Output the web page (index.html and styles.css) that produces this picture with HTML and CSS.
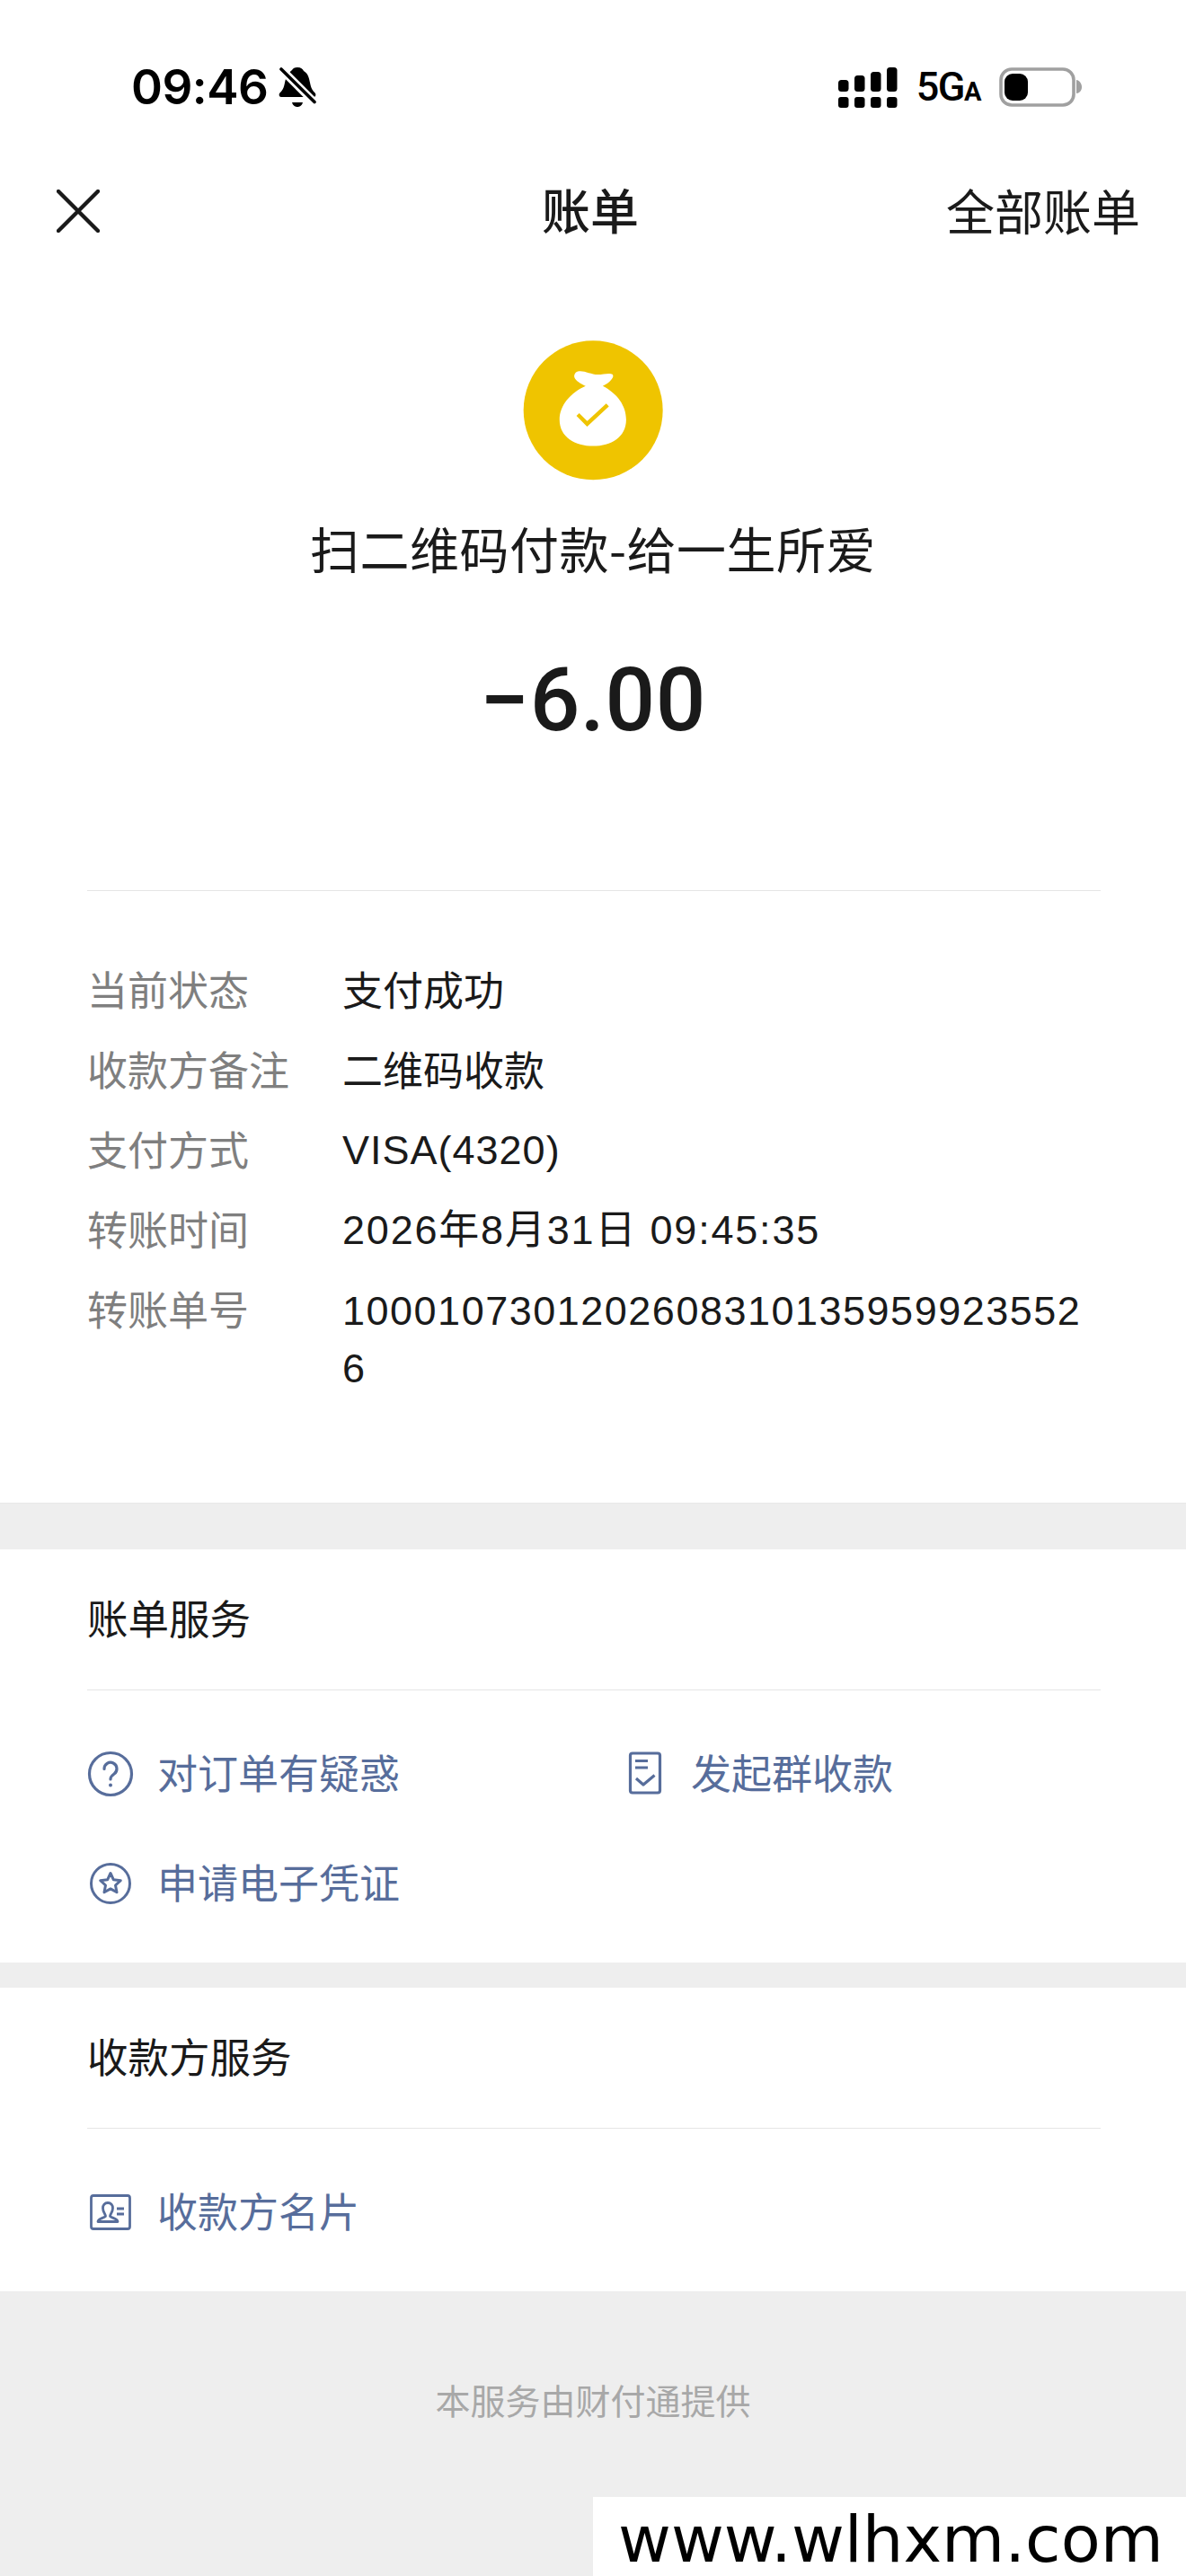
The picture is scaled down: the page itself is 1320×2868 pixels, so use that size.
FILE: index.html
```html
<!DOCTYPE html>
<html lang="zh-CN">
<head>
  <meta charset="UTF-8">
  <title>账单</title>
  <link rel="stylesheet" href="styles.css">
</head>
<body>

  <!-- Status bar -->
  <div class="statusbar">
    <div class="status-left">
      <span class="time">09:46</span>
      <svg class="bell" width="42" height="46" viewBox="0 0 42 46">
        <path d="M21 1C25 1 27 3 28 5C33 8 34 13 35 18C36 24 38 27 41 30C42 32 41 34 39 34L3 34C1 34 0 32 1 30C4 27 6 24 7 18C8 13 10 8 15 4C16 2 18 1 21 1Z" fill="#000"/>
        <path d="M15 40H27C26 44 23 45 21 45C19 45 16 44 15 40Z" fill="#000"/>
        <path d="M0 0L42 42" stroke="#fff" stroke-width="9"/>
        <path d="M3 3L40 39.5" stroke="#000" stroke-width="3.6" stroke-linecap="round"/>
      </svg>
    </div>
    <div class="status-right">
      <svg width="66" height="45" viewBox="0 0 66 45" fill="#000">
        <rect x="0" y="14" width="11.5" height="13" rx="3.5"/>
        <rect x="18" y="9" width="11.5" height="18" rx="3.5"/>
        <rect x="36" y="5" width="11.5" height="22" rx="3.5"/>
        <rect x="54" y="0" width="11.5" height="27" rx="3.5"/>
        <rect x="0" y="33" width="11.5" height="12" rx="3"/>
        <rect x="18" y="33" width="11.5" height="12" rx="3"/>
        <rect x="36" y="33" width="11.5" height="12" rx="3"/>
        <rect x="54" y="33" width="11.5" height="12" rx="3"/>
      </svg>
      <span class="network">5G<small>A</small></span>
      <svg width="92" height="44" viewBox="0 0 92 44">
        <rect x="2" y="2" width="81" height="40" rx="12" fill="none" stroke="#a0a0a0" stroke-width="3.6"/>
        <rect x="6" y="7" width="26" height="30" rx="9" fill="#000"/>
        <path d="M86 14C89 14 92 18 92 22C92 26 89 29 86 29Z" fill="#a0a0a0"/>
      </svg>
    </div>
  </div>

  <!-- Nav -->
  <div class="nav">
    <svg class="close" width="48" height="48" viewBox="0 0 48 48">
      <path d="M2 2L46 46M46 2L2 46" stroke="#1a1a1a" stroke-width="4.4" stroke-linecap="round"/>
    </svg>
    <div class="nav-title">账单</div>
    <div class="nav-link">全部账单</div>
  </div>

  <!-- Summary -->
  <div class="summary">
    <svg class="bag" width="156" height="156" viewBox="97 58 465 467">
      <circle cx="330" cy="291" r="232" fill="#efc400"/>
      <path d="M272 165C290 152 320 172 345 172C365 172 385 165 395 172C402 180 385 200 362 210C410 235 440 275 440 322C440 380 390 410 330 410C270 410 218 380 218 322C218 275 255 232 305 210C285 200 255 185 272 165Z" fill="#fff"/>
      <path d="M279 305L310 336L378 273" fill="none" stroke="#efc400" stroke-width="13" stroke-linejoin="miter"/>
    </svg>
    <div class="summary-title">扫二维码付款-给一生所爱</div>
    <div class="amount">−6.00</div>
  </div>

  <!-- Details -->
  <div class="details">
    <div class="detail-row"><span class="label">当前状态</span><span class="value">支付成功</span></div>
    <div class="detail-row"><span class="label">收款方备注</span><span class="value">二维码收款</span></div>
    <div class="detail-row"><span class="label">支付方式</span><span class="value visa">VISA(4320)</span></div>
    <div class="detail-row"><span class="label">转账时间</span><span class="value date">2026年8月31日 09:45:35</span></div>
    <div class="detail-row"><span class="label">转账单号</span><span class="value serial">10001073012026083101359599235526</span></div>
  </div>

  <div class="gap gap-large"></div>

  <!-- Bill services -->
  <div class="section">
    <div class="section-title">账单服务</div>
    <div class="links">
      <div class="link">
        <svg width="52" height="52" viewBox="0 0 52 52" fill="none" stroke="#576d9b" stroke-width="3.2">
          <circle cx="26" cy="26" r="23.500"/>
          <path d="M19 20.500A7 7 0 1 1 30 26C27.500 27.700 26 29 26 32" stroke-linecap="round"/>
          <circle cx="26" cy="38.500" r="2" fill="#576d9b" stroke="none"/>
        </svg>
        <span>对订单有疑惑</span>
      </div>
      <div class="link">
        <svg class="doc" width="52" height="52" viewBox="0 0 52 52" fill="none" stroke="#576d9b" stroke-width="3.2" stroke-linejoin="round">
          <rect x="9.500" y="3" width="33" height="44" rx="2.500"/>
          <path d="M15 11.500H29M15 19H29"/>
          <path d="M16 31L24 38L36.500 27.500"/>
        </svg>
        <span>发起群收款</span>
      </div>
      <div class="link">
        <svg width="52" height="52" viewBox="0 0 52 52" fill="none" stroke="#576d9b" stroke-width="3" stroke-linejoin="round">
          <circle cx="26" cy="26" r="21.500"/>
          <path d="M26 14.500L29.400 21.800L37.300 22.700L31.500 28L33 35.800L26 31.900L19 35.800L20.500 28L14.700 22.700L22.600 21.800Z"/>
        </svg>
        <span>申请电子凭证</span>
      </div>
    </div>
  </div>

  <div class="gap"></div>

  <!-- Payee services -->
  <div class="section">
    <div class="section-title">收款方服务</div>
    <div class="links">
      <div class="link">
        <svg width="52" height="52" viewBox="0 0 52 52" fill="none" stroke="#576d9b" stroke-width="2.800" stroke-linejoin="round">
          <rect x="4.500" y="7.500" width="43" height="37" rx="2.500"/>
          <path d="M12 36.500C12 33 18.500 32.500 20.500 30.500C21 28.500 17.500 26.500 17.500 21.500C17.500 18 19.500 15.500 23 15.500C26.500 15.500 28.500 18 28.500 21.500C28.500 26.500 25 28.500 25.500 30.500C27.500 32.500 34 33 34 36.500Z"/>
          <path d="M33 22H41M33 28H41"/>
        </svg>
        <span>收款方名片</span>
      </div>
    </div>
  </div>

  <div class="footer">本服务由财付通提供</div>

  <div class="watermark">www.wlhxm.com</div>

</body>
</html>
```

FILE: styles.css
```css
body {
  font-family: "Noto Sans CJK SC", "Noto Sans", sans-serif;
  background: #fff;
  color: #1a1a1a;
  margin: 0;
  height: 2868px;
  position: relative;
  overflow: hidden;
}

.statusbar {
  height: 194px;
  padding: 0 116px 0 146px;
  display: flex;
  justify-content: space-between;
  align-items: center;
  color: #000;
}

.status-left {
  display: flex;
  align-items: center;
  gap: 12px;
}

.time {
  font-family: Inter, sans-serif;
  font-size: 53px;
  font-weight: 600;
  letter-spacing: -0.5px;
  line-height: 60px;
}

.status-right {
  display: flex;
  align-items: center;
  gap: 21px;
}

.network {
  margin-top: 5px;
  font-family: Roboto, sans-serif;
  font-size: 45px;
  font-weight: 500;
  letter-spacing: -1.5px;
  line-height: 44px;
}

.network small {
  font-size: 29px;
  font-weight: 700;
}

.nav {
  height: 82px;
  padding: 0 51px 0 63px;
  display: flex;
  justify-content: space-between;
  align-items: center;
  position: relative;
  font-size: 54px;
}

.nav-title {
  position: absolute;
  left: 603px;
  top: -2px;
  line-height: 82px;
  font-weight: 500;
}

.nav-link {
  margin-top: -4px;
}

.summary {
  display: flex;
  flex-direction: column;
  align-items: center;
  padding-top: 103px;
}

.summary-title {
  margin-top: 34px;
  font-size: 55px;
  line-height: 80px;
  letter-spacing: 0.5px;
}

.amount {
  margin-top: 71px;
  font-family: Roboto, sans-serif;
  font-size: 98px;
  font-weight: 500;
  line-height: 120px;
  letter-spacing: 0.5px;
}

.details {
  margin: 151px 95px 0 97px;
  padding: 78px 0 115px;
  border-top: 1px solid #e5e5e5;
  display: flex;
  flex-direction: column;
  gap: 27px;
  font-size: 45px;
  line-height: 62px;
}

.detail-row {
  display: flex;
}

.label {
  width: 284px;
  flex-shrink: 0;
  color: #7f7f7f;
}

.value {
  word-break: break-all;
}

.visa,
.date,
.serial {
  margin-top: 2px;
  margin-bottom: -2px;
  font-family: "Liberation Sans", "Noto Sans CJK SC", sans-serif;
}

.visa {
  letter-spacing: 1px;
}

.date {
  letter-spacing: 1.8px;
}

.serial {
  letter-spacing: 1.5px;
  line-height: 64px;
  margin-bottom: 2px;
}

.gap {
  height: 28px;
  background: #eeeeee;
}

.gap-large {
  height: 51px;
  border-top: 1px solid #e8e8e8;
}

.section {
  padding: 0 95px 0 97px;
}

.section-title {
  height: 156px;
  line-height: 150px;
  font-size: 45.5px;
  border-bottom: 1px solid #e5e5e5;
}

.links {
  display: grid;
  grid-template-columns: 594px 1fr;
  padding: 32px 0 27px;
}

.link {
  height: 122px;
  display: flex;
  align-items: center;
  gap: 26px;
  font-size: 45px;
  color: #576d9b;
}

.link span {
  margin-top: -6px;
}

.doc {
  margin-left: 1px;
  margin-right: -1px;
}

.footer {
  background: #eeeeee;
  height: 400px;
  padding-top: 92px;
  box-sizing: border-box;
  text-align: center;
  font-size: 39px;
  line-height: 56px;
  color: #a8a8a8;
}

.watermark {
  position: absolute;
  right: 0;
  bottom: 0;
  width: 660px;
  height: 88px;
  box-sizing: border-box;
  padding-left: 28px;
  background: #fff;
  color: #000;
  font-family: "DejaVu Sans", sans-serif;
  font-size: 72px;
  line-height: 94px;
}
```
